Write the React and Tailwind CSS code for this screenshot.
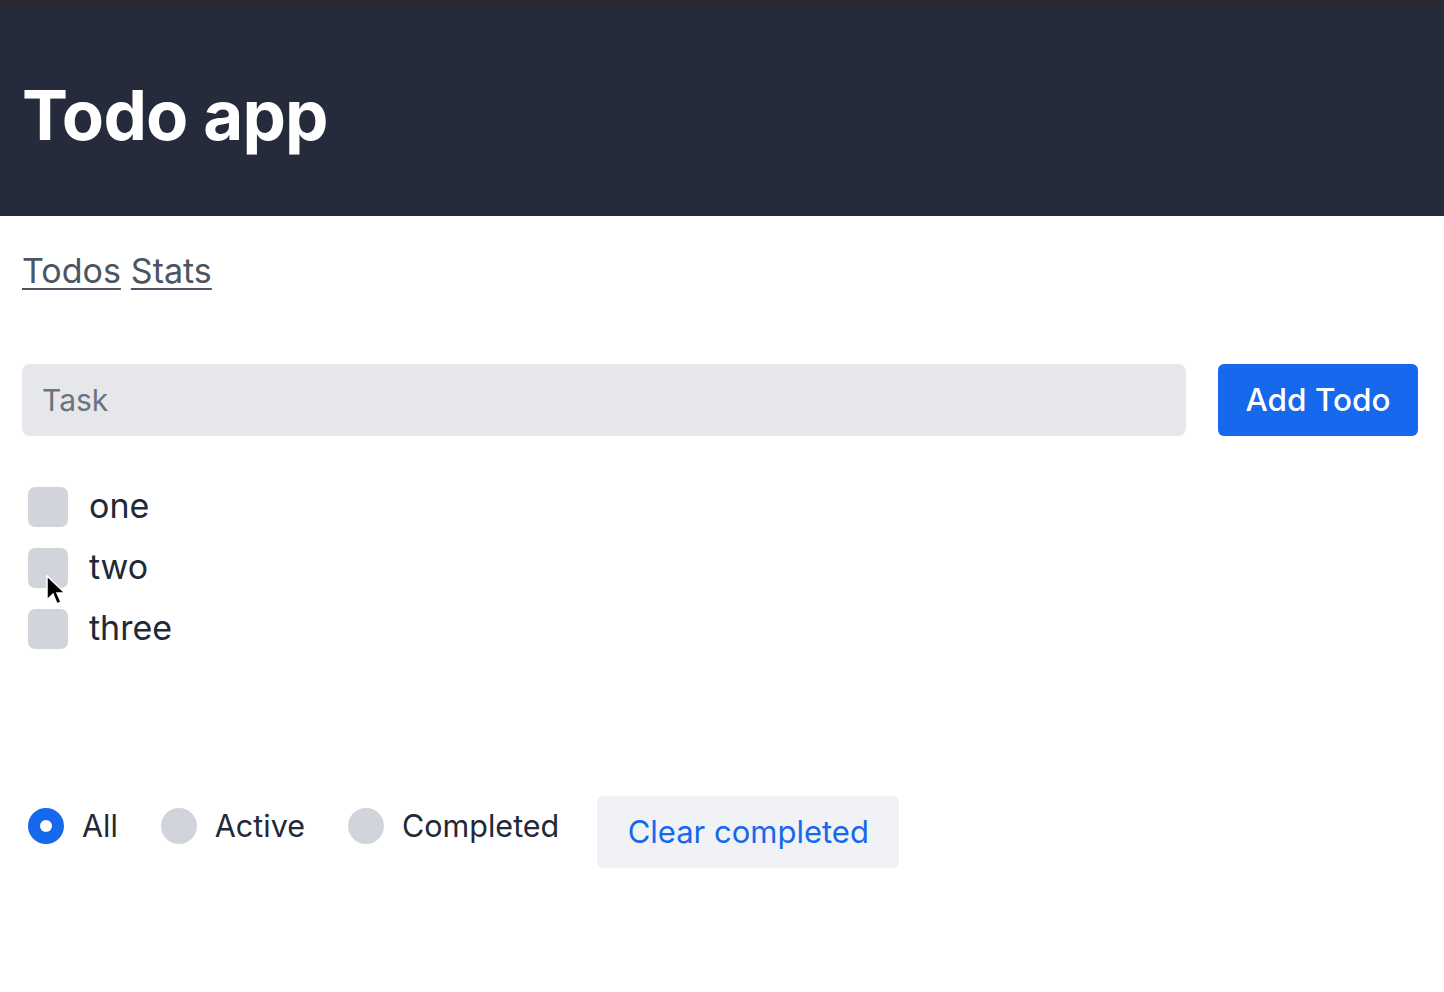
import React, { useState } from "react";

const todosSeed = [
  { id: 1, text: "one", done: false },
  { id: 2, text: "two", done: false },
  { id: 3, text: "three", done: false },
];

const filters = ["All", "Active", "Completed"];

const App = () => {
  const [todos, setTodos] = useState(todosSeed);
  const [filter, setFilter] = useState("All");
  const [task, setTask] = useState("");

  return (
    <div className="min-h-screen bg-white font-['Inter',sans-serif]">
      <div className="h-[7px] bg-[#2a2b2f]" />
      <header className="bg-[#252b3a] h-[209px] flex items-center px-[22px]">
        <h1 className="text-white font-bold text-[69px] tracking-[-0.8px] leading-none pt-[8px]">
          Todo app
        </h1>
      </header>

      <div className="px-[22px]">
        <nav className="flex gap-[10px] pt-[35px] text-[34px] leading-[40px] text-[#4b5563]">
          <a href="#" className="underline underline-offset-[5px] decoration-[2px]">
            Todos
          </a>
          <a href="#" className="underline underline-offset-[5px] decoration-[2px]">
            Stats
          </a>
        </nav>

        <div className="flex gap-[32px] mt-[73px] mr-[4px]">
          <input
            value={task}
            onChange={(e) => setTask(e.target.value)}
            placeholder="Task"
            className="flex-1 h-[72px] rounded-[8px] bg-[#e5e7eb] px-[20px] text-[30px] text-[#1f2937] placeholder:text-[#6b7280] outline-none"
          />
          <button className="w-[200px] h-[72px] rounded-[6px] bg-[#1668ed] text-white text-[31.5px] font-medium">
            Add Todo
          </button>
        </div>

        <ul className="mt-[50px] flex flex-col gap-[20px] pl-[6px]">
          {todos.map((t) => (
            <li key={t.id} className="flex items-center gap-[21px] h-[41px]">
              <button
                onClick={() =>
                  setTodos(todos.map((x) => (x.id === t.id ? { ...x, done: !x.done } : x)))
                }
                className="w-[40px] h-[40px] rounded-[7px] bg-[#d1d5db]"
              />
              <span className="text-[34px] text-[#1f2937] leading-none pb-[1px]">{t.text}</span>
            </li>
          ))}
        </ul>

        <div className="mt-[135px] flex items-center pl-[6px]">
          {filters.map((f) => (
            <label
              key={f}
              onClick={() => setFilter(f)}
              className="flex items-center gap-[18px] mr-[43px] cursor-pointer"
            >
              {filter === f ? (
                <span className="w-[36px] h-[36px] rounded-full bg-[#1668ed] flex items-center justify-center">
                  <span className="w-[12px] h-[12px] rounded-full bg-white" />
                </span>
              ) : (
                <span className="w-[36px] h-[36px] rounded-full bg-[#d1d5db]" />
              )}
              <span className="text-[30.5px] text-[#1f2937] leading-none">{f}</span>
            </label>
          ))}
          <button className="-ml-[5px] w-[302px] h-[72px] rounded-[6px] bg-[#f1f2f5] text-[#1668ed] text-[31px] mt-[12px]">
            Clear completed
          </button>
        </div>
      </div>

      {/* mouse pointer captured in the screenshot */}
      <svg
        className="absolute left-[46px] top-[575px]"
        width="20"
        height="32"
        viewBox="0 0 20 32"
      >
        <path d="M1 1 L1 25 L7 19 L11 29 L15 27 L11 18 L19 18 Z" fill="#000" stroke="#fff" strokeWidth="1.5" />
      </svg>
    </div>
  );
};

export default App;
